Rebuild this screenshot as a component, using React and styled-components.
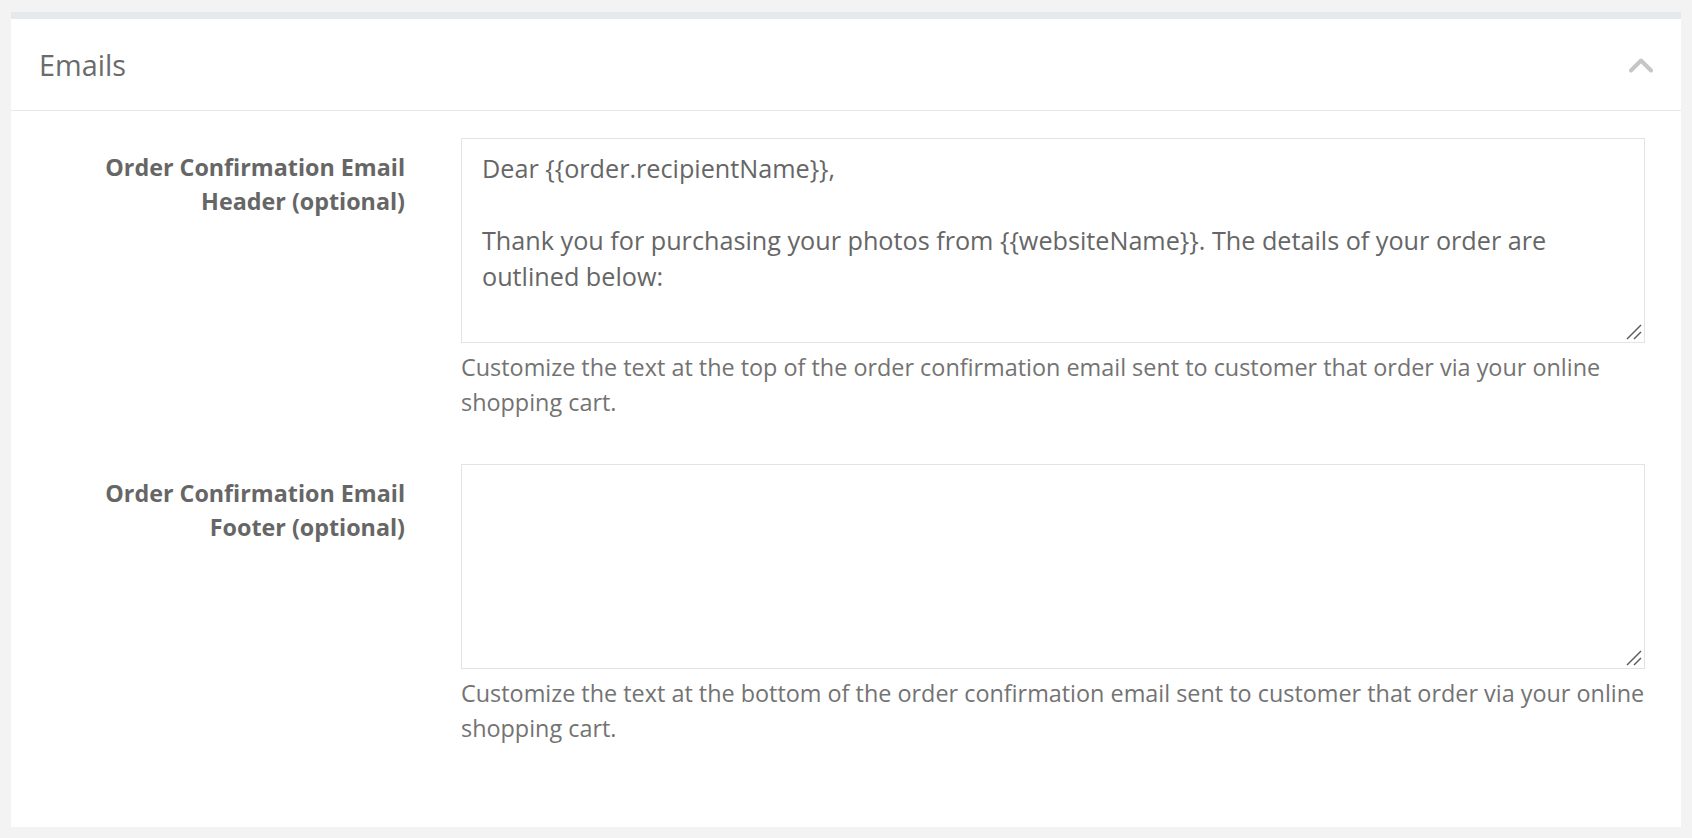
import styled, { createGlobalStyle } from "styled-components";

const GlobalStyle = createGlobalStyle`
  html, body {
    margin: 0;
    padding: 0;
    background: #f3f3f3;
    font-family: "Open Sans", "Liberation Sans", sans-serif;
  }
  * {
    box-sizing: border-box;
  }
`;

const Page = styled.div`
  padding: 12px 11px 12px 11px;
  min-height: 100vh;
`;

const Card = styled.section`
  background: #ffffff;
  border-top: 7px solid #e5e9ec;
`;

const CardHeader = styled.header`
  display: flex;
  align-items: center;
  justify-content: space-between;
  height: 92px;
  padding: 0 28px 0 28px;
  border-bottom: 1px solid #e8e8e8;
`;

const Title = styled.h2`
  margin: 0;
  font-size: 28.8px;
  font-weight: 400;
  color: #6b6b6b;
  line-height: 1;
  padding-top: 2px;
`;

const Toggle = styled.button`
  border: 0;
  background: none;
  padding: 0;
  display: flex;
  cursor: pointer;
  margin-top: 2px;
`;

const CardBody = styled.div`
  display: flex;
  flex-direction: column;
  gap: 45px;
  padding: 27px 36px 82px 0;
`;

const Row = styled.div`
  display: grid;
  grid-template-columns: 394px 1fr;
  column-gap: 56px;
`;

const Label = styled.label`
  padding-top: 13px;
  text-align: right;
  font-weight: 700;
  font-size: 23.3px;
  line-height: 33.5px;
  color: #666666;
`;

const Field = styled.div`
  display: flex;
  flex-direction: column;
`;

const AreaWrap = styled.div`
  position: relative;
`;

const TextArea = styled.textarea`
  display: block;
  width: 100%;
  height: 205px;
  margin: 0;
  padding: 11px 20px 6px 20px;
  border: 1px solid #e3e3e3;
  border-radius: 0;
  resize: vertical;
  font-family: "Open Sans", "Liberation Sans", sans-serif;
  font-size: 25.2px;
  line-height: 36px;
  color: #666666;
  background: #ffffff;
  outline: none;

  &::-webkit-resizer {
    background: transparent;
  }
`;

const Grip = styled.svg`
  position: absolute;
  right: 3px;
  bottom: 3px;
  pointer-events: none;
`;

const Help = styled.p`
  margin: 7px 0 0 0;
  font-size: 23.4px;
  line-height: 34.5px;
  color: #737373;
`;

const ChevronUp = () => (
  <svg width="24" height="15" viewBox="0 0 24 15" fill="none">
    <polyline
      points="2,12.5 12,2.5 22,12.5"
      stroke="#c6c6c6"
      strokeWidth="4"
      strokeLinecap="round"
      strokeLinejoin="round"
    />
  </svg>
);

const ResizeGrip = () => (
  <Grip width="16" height="16" viewBox="0 0 16 16">
    <line x1="1" y1="15" x2="15" y2="1" stroke="#5a5a5a" strokeWidth="1.4" />
    <line x1="8" y1="15" x2="15" y2="8" stroke="#5a5a5a" strokeWidth="1.4" />
  </Grip>
);

const fields = [
  {
    id: "header",
    label: ["Order Confirmation Email", "Header (optional)"],
    value:
      "Dear {{order.recipientName}},\n\nThank you for purchasing your photos from {{websiteName}}. The details of your order are outlined below:",
    help: "Customize the text at the top of the order confirmation email sent to customer that order via your online shopping cart.",
  },
  {
    id: "footer",
    label: ["Order Confirmation Email", "Footer (optional)"],
    value: "",
    help: "Customize the text at the bottom of the order confirmation email sent to customer that order via your online shopping cart.",
  },
];

export default function App() {
  return (
    <>
      <GlobalStyle />
      <Page>
        <Card>
          <CardHeader>
            <Title>Emails</Title>
            <Toggle aria-label="Collapse">
              <ChevronUp />
            </Toggle>
          </CardHeader>
          <CardBody>
            {fields.map((f) => (
              <Row key={f.id}>
                <Label htmlFor={f.id}>
                  {f.label[0]}
                  <br />
                  {f.label[1]}
                </Label>
                <Field>
                  <AreaWrap>
                    <TextArea id={f.id} defaultValue={f.value} />
                    <ResizeGrip />
                  </AreaWrap>
                  <Help>{f.help}</Help>
                </Field>
              </Row>
            ))}
          </CardBody>
        </Card>
      </Page>
    </>
  );
}
